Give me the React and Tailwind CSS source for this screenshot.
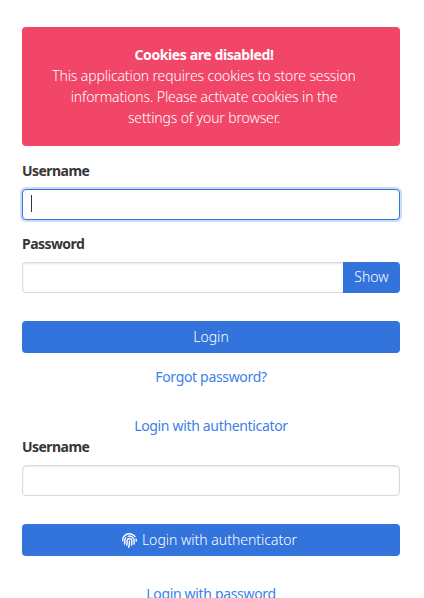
import React from "react";
import { FaFingerprint } from "react-icons/fa";

const Label = ({ children }) => (
  <label className="block text-[14px] leading-[21px] font-bold text-[#363636] tracking-[-0.55px]">{children}</label>
);

const Field = ({ focused }) => (
  <div className="relative">
    <input
      className={
        "block w-full h-[31px] px-2 bg-white rounded-[4px] border outline-none text-[14px] " +
        (focused
          ? "border-[#3273dc] shadow-[0_0_0_2px_rgba(50,115,220,0.25)]"
          : "border-[#dbdbdb] shadow-[inset_0_1px_2px_rgba(10,10,10,0.1)]")
      }
    />
    {focused && <span className="absolute left-[9px] top-[6px] w-px h-[17px] bg-[#363636]" />}
  </div>
);

const Primary = ({ children, className = "" }) => (
  <button className={"flex items-center justify-center w-full h-8 pb-[2px] rounded-[4px] bg-[#3273dc] text-white text-[14px] font-light tracking-normal " + className}>
    {children}
  </button>
);

const Link = ({ children, className = "" }) => (
  <a className={"block text-center text-[14px] leading-[21px] text-[#3d7fe8] " + className}>{children}</a>
);

export default function App() {
  return (
    <div className="h-[598px] overflow-hidden bg-white pl-[22px] pr-[24px] pt-[27px] font-['Noto_Sans',sans-serif] tracking-[-0.33px]">
      <div className="bg-[#f14668] rounded-[4px] pl-[27px] pr-[41px] pt-[16.5px] pb-[18.5px] text-center text-white text-[14px] leading-[21px] font-light tracking-[-0.13px]">
        <strong className="font-bold tracking-[-0.4px]">Cookies are disabled!</strong>
        <br />
        This application requires cookies to store session informations. Please activate cookies in the settings of your browser.
      </div>

      <div className="mt-[14px]">
        <Label>Username</Label>
        <div className="mt-2"><Field focused /></div>
      </div>

      <div className="mt-[13px]">
        <Label>Password</Label>
        <div className="mt-2 flex">
          <input className="block flex-1 min-w-0 h-[31px] px-2 bg-white rounded-l-[4px] border border-r-0 border-[#dbdbdb] shadow-[inset_0_1px_2px_rgba(10,10,10,0.1)] outline-none" />
          <button className="h-[31px] w-[57px] pb-[2px] bg-[#3273dc] text-white text-[14px] font-light tracking-normal rounded-r-[4px]">Show</button>
        </div>
      </div>

      <Primary className="mt-7">Login</Primary>
      <Link className="mt-[13px]">Forgot password?</Link>
      <Link className="mt-[28px]">Login with authenticator</Link>

      <div>
        <Label>Username</Label>
        <div className="mt-2"><Field /></div>
      </div>

      <Primary className="mt-7 gap-[5px] pr-[3px]">
        <FaFingerprint className="w-[15px] h-[15px] mt-[2px]" />
        <span>Login with authenticator</span>
      </Primary>
      <Link className="mt-[27px]">Login with password</Link>
    </div>
  );
}
